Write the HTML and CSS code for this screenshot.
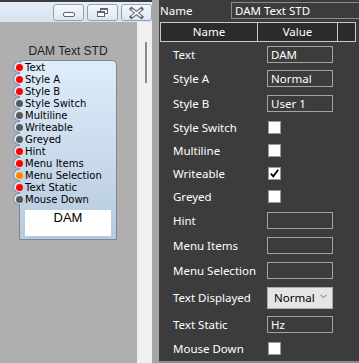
FILE: index.html
```html
<!DOCTYPE html>
<html>
<head>
<meta charset="utf-8">
<link rel="stylesheet" href="styles.css">
</head>
<body>
<div class="app">
  <div class="left">
    <div class="titlebar">
      <div class="wbtn">
        <svg width="29" height="15" viewBox="0 0 29 15"><rect x="9.5" y="7.5" width="11" height="4" rx="1.5" fill="#fff" stroke="#5c6476"/></svg>
      </div>
      <div class="wbtn">
        <svg width="29" height="15" viewBox="0 0 29 15"><rect x="12.5" y="3.5" width="7" height="5" fill="#fff" stroke="#5c6476"/><rect x="12.5" y="3.5" width="7" height="1.5" fill="#5c6476"/><rect x="9.5" y="6.5" width="7" height="5" fill="#fff" stroke="#5c6476"/><rect x="9.5" y="6.5" width="7" height="1.5" fill="#5c6476"/></svg>
      </div>
      <div class="wbtn">
        <svg width="29" height="15" viewBox="0 0 29 15"><path d="M9.5 4 L19.5 12 M19.5 4 L9.5 12" stroke="#5c6476" stroke-width="3.6" stroke-linecap="square"/><path d="M9.8 4.3 L19.2 11.7 M19.2 4.3 L9.8 11.7" stroke="#fff" stroke-width="1.6"/></svg>
      </div>
    </div>
    <div class="work">
      <div class="canvas">
        <div class="module">
          <div class="mod-title">DAM Text STD</div>
          <div class="mod-body">
            <ul class="ports">
              <li class="port"><span class="pin"></span><span class="dot red"></span><span class="plabel">Text</span></li>
              <li class="port"><span class="pin"></span><span class="dot red"></span><span class="plabel">Style A</span></li>
              <li class="port"><span class="pin"></span><span class="dot red"></span><span class="plabel">Style B</span></li>
              <li class="port"><span class="pin"></span><span class="dot grey"></span><span class="plabel">Style Switch</span></li>
              <li class="port"><span class="pin"></span><span class="dot grey"></span><span class="plabel">Multiline</span></li>
              <li class="port"><span class="pin"></span><span class="dot grey"></span><span class="plabel">Writeable</span></li>
              <li class="port"><span class="pin"></span><span class="dot grey"></span><span class="plabel">Greyed</span></li>
              <li class="port"><span class="pin"></span><span class="dot red"></span><span class="plabel">Hint</span></li>
              <li class="port"><span class="pin"></span><span class="dot red"></span><span class="plabel">Menu Items</span></li>
              <li class="port"><span class="pin"></span><span class="dot orange"></span><span class="plabel">Menu Selection</span></li>
              <li class="port"><span class="pin"></span><span class="dot red"></span><span class="plabel">Text Static</span></li>
              <li class="port"><span class="pin"></span><span class="dot grey"></span><span class="plabel">Mouse Down</span></li>
            </ul>
            <div class="display">DAM</div>
          </div>
        </div>
      </div>
      <div class="vscroll"><div class="thumb"></div></div>
    </div>
  </div>
  <div class="sep"></div>
  <div class="panel">
    <div class="name-row">
      <span class="name-label">Name</span>
      <div class="name-input">DAM Text STD</div>
    </div>
    <div class="grid">
      <div class="grid-head">
        <div class="h-name">Name</div>
        <div class="h-value">Value</div>
        <div class="h-extra"></div>
      </div>
      <div class="row r24"><span class="lbl">Text</span><div class="tbox">DAM</div></div>
      <div class="row r25"><span class="lbl">Style A</span><div class="tbox">Normal</div></div>
      <div class="row r25"><span class="lbl">Style B</span><div class="tbox">User 1</div></div>
      <div class="row r23"><span class="lbl">Style Switch</span><div class="cbox"></div></div>
      <div class="row r23"><span class="lbl">Multiline</span><div class="cbox"></div></div>
      <div class="row r23"><span class="lbl">Writeable</span><div class="cbox"><svg width="11" height="11" viewBox="0 0 11 11"><path d="M1.8 5.6 L4.3 8.4 L9.2 1.8" fill="none" stroke="#000" stroke-width="1.8"/></svg></div></div>
      <div class="row r23"><span class="lbl">Greyed</span><div class="cbox"></div></div>
      <div class="row r25"><span class="lbl">Hint</span><div class="tbox"></div></div>
      <div class="row r25"><span class="lbl">Menu Items</span><div class="tbox"></div></div>
      <div class="row r25"><span class="lbl">Menu Selection</span><div class="tbox"></div></div>
      <div class="row r29"><span class="lbl">Text Displayed</span><div class="dd"><span>Normal</span><svg width="7" height="5" viewBox="0 0 7 5"><path d="M0.5 0.8 L3.5 3.8 L6.5 0.8" fill="none" stroke="#6a6a6a" stroke-width="1"/></svg></div></div>
      <div class="row r25"><span class="lbl">Text Static</span><div class="tbox">Hz</div></div>
      <div class="row r23"><span class="lbl">Mouse Down</span><div class="cbox"></div></div>
    </div>
  </div>
</div>
</body>
</html>
```
FILE: styles.css
```css
* { box-sizing: border-box; }
html, body { margin: 0; padding: 0; }
body {
  width: 359px;
  height: 363px;
  overflow: hidden;
  background: #3c3c3c;
  font-family: "Noto Sans", sans-serif;
}
.app { display: flex; height: 363px; }

/* left editor pane */
.left {
  width: 152px;
  display: flex;
  flex-direction: column;
  background: #afafaf;
}
.titlebar {
  height: 22px;
  border-top: 2px solid #3c3c3c;
  padding-top: 2px;
  background: linear-gradient(#e6eef8, #d6e2f1);
  display: flex;
  justify-content: flex-end;
  align-items: flex-start;
  gap: 3px;
}
.wbtn {
  width: 31px;
  height: 17px;
  border: 1px solid #93a1b8;
  border-radius: 3px;
  background: linear-gradient(#f5f8fc, #dde6f1);
  display: flex;
}
.wbtn svg { display: block; }
.work { flex: 1; display: flex; }
.canvas {
  width: 137px;
  background: #afafaf;
  padding: 22px 0 0 19px;
}
.vscroll {
  width: 15px;
  background: #f0f0f0;
  padding: 20px 0 0 8px;
}
.thumb { width: 2px; height: 41px; background: #8a8a8a; }

.module { width: 98px; }
.mod-title {
  font-family: "Liberation Sans", Arial, sans-serif;
  font-size: 12px;
  line-height: 14px;
  height: 14px;
  text-align: center;
  color: #1e1e1e;
  white-space: nowrap;
  margin-bottom: 2px;
}
.mod-body {
  border: 1px solid #7b8794;
  border-radius: 5px 5px 0 0;
  background: linear-gradient(#dfedfb, #b6cadd);
  padding-bottom: 3px;
}
.ports { list-style: none; margin: 0; padding: 0; }
.port {
  display: flex;
  align-items: center;
  height: 12px;
  font-family: "DejaVu Sans", sans-serif;
  font-size: 10px;
  color: #000;
  white-space: nowrap;
}
.pin {
  flex: none;
  width: 7px;
  height: 12px;
  margin-left: -7px;
  border: 1px solid #8491a0;
  border-right: 0;
  border-radius: 6px 0 0 6px;
  background: #d3e3f2;
}
.dot {
  flex: none;
  width: 7px;
  height: 7px;
  border-radius: 50%;
  margin-left: -4px;
}
.dot.red { background: #ff0000; }
.dot.grey { background: #565a60; }
.dot.orange { background: #ff8c00; }
.plabel { margin-left: 2px; }
.display {
  margin: 5px 5px 0 5px;
  height: 26px;
  background: #fff;
  text-align: center;
  font-family: "Liberation Sans", Arial, sans-serif;
  font-size: 13px;
  line-height: 15px;
  color: #000;
}

.sep { width: 7px; background: #a5a5a5; }

/* property panel */
.panel {
  width: 200px;
  height: 363px;
  background: #3c3c3c;
  color: #fff;
  font-size: 11.5px;
  border-bottom: 2px solid #8b8b8b;
}
.name-row { height: 22px; display: flex; align-items: flex-start; }
.name-label { width: 72px; padding-left: 1px; line-height: 22px; }
.name-input {
  flex: 1;
  margin-top: 2px;
  height: 17px;
  border: 1px solid #8a8a8a;
  border-right: 0;
  padding-left: 3px;
  line-height: 15px;
  white-space: nowrap;
}
.grid { margin-left: 1px; width: 196px; }
.grid-head {
  display: flex;
  height: 20px;
  border: 1px solid #c8c8c8;
  background: #2b2b2b;
  line-height: 18px;
  text-align: center;
}
.h-name { width: 97px; border-right: 1px solid #c8c8c8; }
.h-value { width: 80px; border-right: 1px solid #c8c8c8; }
.h-extra { flex: 1; }
.row { display: flex; align-items: center; }
.r23 { height: 23px; }
.r24 { height: 24px; }
.r25 { height: 25px; }
.r29 { height: 29px; }
.lbl { width: 107px; padding-left: 13px; white-space: nowrap; }
.tbox {
  width: 66px;
  height: 17px;
  border: 1px solid #a3a3a3;
  padding-left: 3px;
  line-height: 15px;
  white-space: nowrap;
}
.cbox {
  width: 13px;
  height: 13px;
  margin-left: 1px;
  background: #fff;
  border: 1px solid #9a9a9a;
  display: flex;
  align-items: center;
  justify-content: center;
}
.cbox svg { display: block; }
.dd {
  width: 66px;
  height: 22px;
  background: #e5e5e5;
  border: 1px solid #acacac;
  color: #000;
  font-size: 11.5px;
  display: flex;
  align-items: center;
  justify-content: space-between;
  padding: 0 5px 0 6px;
}
.dd svg { display: block; margin-top: -3px; }
```
